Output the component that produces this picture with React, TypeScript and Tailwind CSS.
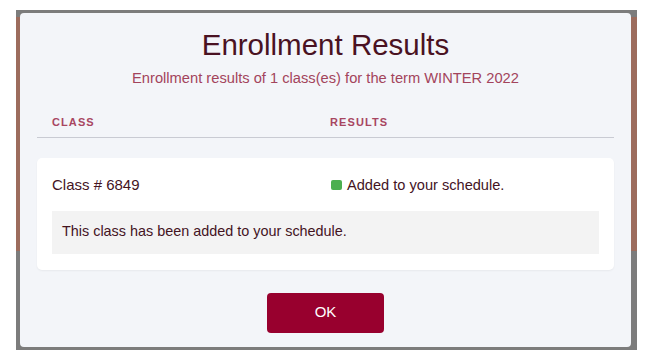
export default function App() {
  return (
    <div className="w-[656px] h-[359px] bg-white pt-[10px] pl-[16px] font-['Liberation_Sans',Arial,sans-serif]">
      <div className="w-[621px] h-[340px] pt-[3px] pl-[4px] bg-[linear-gradient(to_bottom,#7c7c7c_0%,#7c7c7c_2%,#9c6c5d_2%,#9c6c5d_71%,#7c7c7c_71%,#7c7c7c_100%)]">
        <div className="w-[611px] h-[334px] bg-[#f3f5f9] rounded-[4px] px-[17px] flex flex-col">
          <h1 className="text-center text-[29.5px] leading-[36px] text-[#4a1222] mt-[14px]">
            Enrollment Results
          </h1>
          <p className="text-center text-[14.7px] leading-[20px] text-[#a3445c] mt-[5px]">
            Enrollment results of 1 class(es) for the term WINTER 2022
          </p>

          <div className="mt-[26px] flex px-[15px] pb-[6px] border-b border-[#c9cbd3] text-[11px] font-bold tracking-[0.1em] text-[#a84661]">
            <div className="w-[278px]">CLASS</div>
            <div>RESULTS</div>
          </div>

          <div className="mt-[20px] bg-white rounded-[5px] shadow-[0_1px_2px_rgba(0,0,0,0.05)] px-[15px] pt-[17px] pb-[16px]">
            <div className="flex items-center leading-[20px] text-[#44141f]">
              <div className="w-[279px] text-[15px]">Class # 6849</div>
              <div className="flex items-center text-[14.6px]">
                <span className="w-[11px] h-[10px] rounded-[2px] bg-[#4caf50] mr-[5px]"></span>
                Added to your schedule.
              </div>
            </div>
            <div className="mt-[16px] bg-[#f3f3f3] h-[43px] px-[10px] flex items-center text-[14.4px] text-[#44141f]">
              This class has been added to your schedule.
            </div>
          </div>

          <div className="flex justify-center mt-[23px]">
            <button className="w-[117px] h-[40px] rounded-[4px] bg-[#98002e] text-white text-[15px]">
              OK
            </button>
          </div>
        </div>
      </div>
    </div>
  );
}
